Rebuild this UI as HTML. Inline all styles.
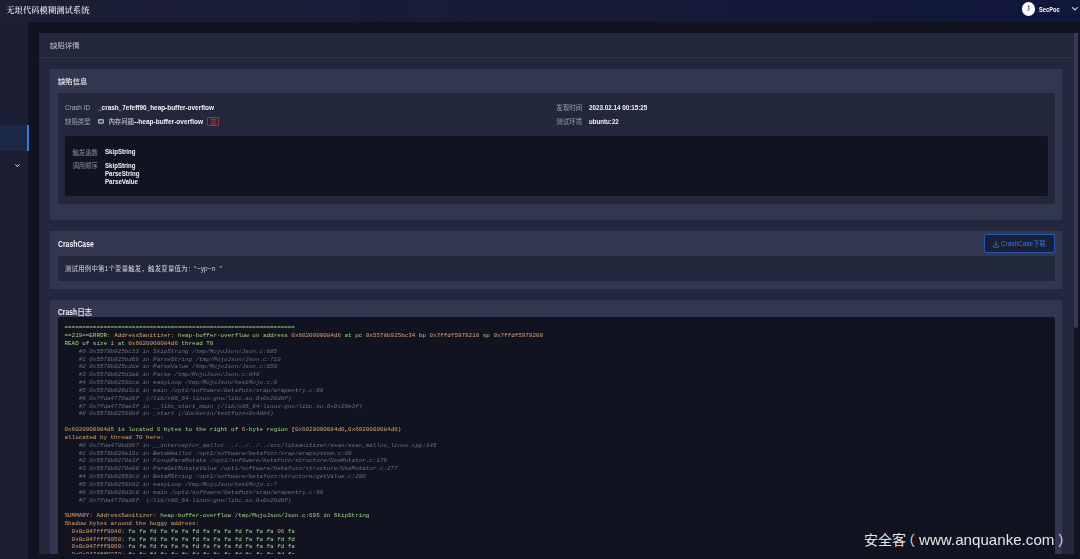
<!DOCTYPE html>
<html>
<head>
<meta charset="utf-8">
<title>无垠代码模糊测试系统</title>
<style>
*{margin:0;padding:0;box-sizing:border-box}
html,body{width:1080px;height:559px;overflow:hidden;background:#111420}
body{position:relative;font-family:"Liberation Sans","Noto Sans CJK SC",sans-serif;-webkit-font-smoothing:antialiased}
.grp{display:block;position:static}
.b{position:absolute}
.t{position:absolute;white-space:pre;height:12px;transform-origin:0 50%;filter:blur(0.35px)}
#watermark .t{filter:none}
#hdr{left:0;top:0;width:1080px;height:21.5px;background:linear-gradient(90deg,#1c1f34 0%,#0f173b 100%)}
#side{left:0;top:21.4px;width:28.2px;height:538px;background:#1c1f33}
#act{left:0;top:124.8px;width:29px;height:26.1px;background:#1c2848}
#actbar{left:26.9px;top:124.8px;width:2.1px;height:26.1px;background:#2c7de2}
#card{left:39.1px;top:32.9px;width:1034.5px;height:521px;background:#23273b}
#sep{left:39.1px;top:57px;width:1034.4px;height:1px;background:#2f3449}
#thumb{left:1073.6px;top:32.9px;width:4.4px;height:295.3px;background:#343b52;border-radius:0 0 2px 2px}
.in{background:#32364f}
.pn{background:#23273b;border-radius:1.5px}
.bk{background:#111420;border-radius:1.5px}
#in1{left:50.2px;top:68.8px;width:1011.9px;height:151.4px}
#pn1{left:57.9px;top:93.2px;width:996.9px;height:110.4px}
#bk1{left:65.1px;top:135.8px;width:982.5px;height:60.1px}
#in2{left:50.2px;top:231.2px;width:1011.9px;height:57.6px}
#pn2{left:57.9px;top:255.7px;width:996.9px;height:25.3px}
#in3{left:50.2px;top:299.8px;width:1011.9px;height:254px}
#bk3{left:57.9px;top:316.9px;width:996.9px;height:237px;border-radius:1.5px 1.5px 0 0}
#btn{left:983.6px;top:234.1px;width:71.4px;height:18.8px;border:1px solid #2359b6;border-radius:2px;background:#1b1f36}
#tag{left:207.2px;top:116.6px;width:12.3px;height:9.4px;border:0.8px solid #93363b;border-radius:1px;background:#30222f;color:#cc464b;font:400 6.2px/7.8px "Liberation Sans","Noto Sans CJK SC",sans-serif;text-align:center}
#avatar{left:1021.6px;top:2.4px;width:13.4px;height:13.4px;border-radius:50%;background:#fff}
#botmask{left:28.2px;top:553.5px;width:1052px;height:6px;background:#111420}
#log{position:absolute;white-space:pre;margin:0;filter:blur(0.4px)}
#log .g{color:#a2d386}
#log .o{color:#dba16d}
#log .c{color:#6a7082;font-style:italic}
#log .w{color:#d6d9e2}
svg{position:absolute;overflow:visible}
</style>
</head>
<body>
<aside class="grp" id="sidebar">
<div class="b" id="side"></div>
<div class="b" id="act"></div>
<div class="b" id="actbar"></div>
<svg id="sidechev" style="left:15.2px;top:163.9px" width="4.8" height="3.4" viewBox="0 0 4.8 3.4"><path d="M0.6 0.7 L2.4 2.6 L4.2 0.7" fill="none" stroke="#e6e8f0" stroke-width="1.0" stroke-linecap="round" stroke-linejoin="round"/></svg>
</aside>
<main class="grp" id="content">
<div class="b" id="card"></div>
<div class="b" id="sep"></div>
<div class="t" id="h1" style="left:50.00px;top:40.38px;font:400 7.4px/12px 'Liberation Sans', 'Noto Sans CJK SC', sans-serif;color:#bfc3d0;letter-spacing:0.007px">缺陷详情</div>
<section class="grp" id="sec-info">
<div class="b in" id="in1"></div>
<div class="b pn" id="pn1"></div>
<div class="b bk" id="bk1"></div>
<svg id="memicon" style="left:97.5px;top:119.2px" width="6" height="4.8" viewBox="0 0 6 4.8"><rect x="0.5" y="0.5" width="5" height="3.8" rx="0.5" fill="#8d93a8" stroke="#b4b9ca" stroke-width="0.9"/><rect x="1.5" y="1.5" width="3" height="1.8" fill="#2a2e42"/></svg>
<div class="b" id="tag">高</div>
<div class="t" id="h2" style="left:58.00px;top:75.97px;font:500 7.3px/12px 'Liberation Sans', 'Noto Sans CJK SC', sans-serif;color:#eef0f6;letter-spacing:0.038px">缺陷信息</div>
<div class="t" id="l1" style="left:65.00px;top:101.60px;font:400 6.8px/12px 'Liberation Sans', 'Noto Sans CJK SC', sans-serif;color:#abb1c4;transform:scaleX(0.9319)">Crash ID</div>
<div class="t" id="v1" style="left:97.50px;top:101.60px;font:700 7.1px/12px 'Liberation Sans', 'Noto Sans CJK SC', sans-serif;color:#f2f3f7;transform:scaleX(0.9054)">_crash_7efeff90_heap-buffer-overflow</div>
<div class="t" id="l2" style="left:65.00px;top:116.25px;font:400 6.4px/12px 'Liberation Sans', 'Noto Sans CJK SC', sans-serif;color:#9da3b7;letter-spacing:0.046px">缺陷类型</div>
<div class="t" id="v2a" style="left:108.40px;top:115.95px;font:400 6.4px/12px 'Liberation Sans', 'Noto Sans CJK SC', sans-serif;color:#dcdee8;letter-spacing:0.013px">内存问题</div>
<div class="t" id="v2b" style="left:134.00px;top:115.70px;font:700 7.1px/12px 'Liberation Sans', 'Noto Sans CJK SC', sans-serif;color:#f2f3f7;transform:scaleX(0.9179)">--heap-buffer-overflow</div>
<div class="t" id="l3" style="left:556.25px;top:102.35px;font:400 6.4px/12px 'Liberation Sans', 'Noto Sans CJK SC', sans-serif;color:#9da3b7;letter-spacing:0.146px">发现时间</div>
<div class="t" id="v3" style="left:588.75px;top:101.50px;font:700 7.1px/12px 'Liberation Sans', 'Noto Sans CJK SC', sans-serif;color:#f2f3f7;transform:scaleX(0.8858)">2023.02.14 00:15:25</div>
<div class="t" id="l4" style="left:556.25px;top:116.10px;font:400 6.4px/12px 'Liberation Sans', 'Noto Sans CJK SC', sans-serif;color:#9da3b7;letter-spacing:0.146px">测试环境</div>
<div class="t" id="v4" style="left:588.75px;top:115.95px;font:700 7.1px/12px 'Liberation Sans', 'Noto Sans CJK SC', sans-serif;color:#f2f3f7;transform:scaleX(0.8678)">ubuntu:22</div>
<div class="t" id="l5" style="left:72.50px;top:146.85px;font:400 6.4px/12px 'Liberation Sans', 'Noto Sans CJK SC', sans-serif;color:#878da3;letter-spacing:-0.021px">触发函数</div>
<div class="t" id="v5" style="left:105.00px;top:146.00px;font:700 7.1px/12px 'Liberation Sans', 'Noto Sans CJK SC', sans-serif;color:#f2f3f7;transform:scaleX(0.8595)">SkipString</div>
<div class="t" id="l6" style="left:72.50px;top:160.15px;font:400 6.4px/12px 'Liberation Sans', 'Noto Sans CJK SC', sans-serif;color:#878da3;letter-spacing:-0.021px">调用顺序</div>
<div class="t" id="v6a" style="left:105.00px;top:159.50px;font:700 7.1px/12px 'Liberation Sans', 'Noto Sans CJK SC', sans-serif;color:#f2f3f7;transform:scaleX(0.8595)">SkipString</div>
<div class="t" id="v6b" style="left:105.00px;top:168.00px;font:700 7.1px/12px 'Liberation Sans', 'Noto Sans CJK SC', sans-serif;color:#f2f3f7;transform:scaleX(0.8662)">ParseString</div>
<div class="t" id="v6c" style="left:105.00px;top:176.00px;font:700 7.1px/12px 'Liberation Sans', 'Noto Sans CJK SC', sans-serif;color:#f2f3f7;transform:scaleX(0.8713)">ParseValue</div>
</section>
<section class="grp" id="sec-case">
<div class="b in" id="in2"></div>
<div class="b pn" id="pn2"></div>
<div class="b" id="btn"></div>
<svg id="dlicon" style="left:993px;top:240.5px" width="6" height="7" viewBox="0 0 6 7"><path d="M3 0.4 V4.2 M1.4 2.8 L3 4.4 L4.6 2.8 M0.5 4.6 V6.3 H5.5 V4.6" fill="none" stroke="#2f7be0" stroke-width="0.75" stroke-linecap="round" stroke-linejoin="round"/></svg>
<div class="t" id="h3" style="left:58.00px;top:238.00px;font:700 8.4px/12px 'Liberation Sans', 'Noto Sans CJK SC', sans-serif;color:#f4f4f8;transform:scaleX(0.8180)">CrashCase</div>
<div class="t" id="btnt" style="left:1001.25px;top:238.00px;font:400 7.0px/12px 'Liberation Sans', 'Noto Sans CJK SC', sans-serif;color:#2f7be0;transform:scaleX(0.9130)">CrashCase下载</div>
<div class="t" id="cc" style="left:65.00px;top:263.15px;font:400 6.4px/12px 'Liberation Sans', 'Noto Sans CJK SC', sans-serif;color:#d6d9e3;letter-spacing:0.219px">测试用例中第1个变量触发，触发变量值为：“~yp~n  ”</div>
</section>
<section class="grp" id="sec-log">
<div class="b in" id="in3"></div>
<div class="b bk" id="bk3"></div>
<div class="t" id="h4a" style="left:58.00px;top:306.50px;font:700 8.2px/12px 'Liberation Sans', 'Noto Sans CJK SC', sans-serif;color:#f4f4f8;transform:scaleX(0.8183)">Crash</div>
<div class="t" id="h4b" style="left:77.20px;top:307.11px;font:500 7.6px/12px 'Liberation Sans', 'Noto Sans CJK SC', sans-serif;color:#eeeff5;letter-spacing:-0.387px">日志</div>
<pre id="log" style="left:64.5px;top:324.29px;font:5.92px/7.828px 'Liberation Mono', 'Noto Sans CJK SC', monospace"><span class="g">=================================================================</span>
<span class="g">==219==ERROR: </span><span class="o">AddressSanitizer</span><span class="g">: heap-buffer-overflow on address </span><span class="o">0x6020000084d6</span><span class="g"> at pc </span><span class="o">0x5578b925bc34</span><span class="g"> bp </span><span class="o">0x7ffdf5979210</span><span class="g"> sp </span><span class="o">0x7ffdf5979200</span>
<span class="g">READ of size </span><span class="o">1</span><span class="g"> at </span><span class="o">0x6020000084d6</span><span class="g"> thread T0</span>
<span class="c">    #0 0x5578b925bc33 in SkipString /tmp/MojoJson/Json.c:695</span>
<span class="c">    #1 0x5578b925bd6b in ParseString /tmp/MojoJson/Json.c:719</span>
<span class="c">    #2 0x5578b925cdde in ParseValue /tmp/MojoJson/Json.c:858</span>
<span class="c">    #3 0x5578b925d3ab in Parse /tmp/MojoJson/Json.c:949</span>
<span class="c">    #4 0x5578b9258bca in easyLoop /tmp/MojoJson/testMojo.c:8</span>
<span class="c">    #5 0x5578b926d3c8 in main /opt1/software/betafuzz/srap/wrapentry.c:98</span>
<span class="c">    #6 0x7fda4770ad8f  (/lib/x86_64-linux-gnu/libc.so.6+0x29d8f)</span>
<span class="c">    #7 0x7fda4770ae3f in __libc_start_main (/lib/x86_64-linux-gnu/libc.so.6+0x29e3f)</span>
<span class="c">    #8 0x5578b92589b4 in _start (/dockerin/testfuzz+0x49b4)</span>

<span class="o">0x6020000084d6</span><span class="g"> is located </span><span class="o">0</span><span class="g"> bytes to the right of </span><span class="o">6</span><span class="g">-byte region </span><span class="w">[</span><span class="o">0x6020000084d0</span><span class="w">,</span><span class="o">0x6020000084d6</span><span class="g">)</span>
<span class="o">allocated by thread T0 here:</span>
<span class="c">    #0 0x7fda479bd867 in __interceptor_malloc ../../../../src/libsanitizer/asan/asan_malloc_linux.cpp:145</span>
<span class="c">    #1 0x5578b926e10c in BetaWmalloc /opt1/software/betafuzz/srap/wrapsystem.c:88</span>
<span class="c">    #2 0x5578b9270a3f in FixupParaMutate /opt1/software/betafuzz/structure/UseMutator.c:176</span>
<span class="c">    #3 0x5578b9270e00 in ParaGetMutateValue /opt1/software/betafuzz/structure/UseMutator.c:277</span>
<span class="c">    #4 0x5578b92658cd in BetaMString /opt1/software/betafuzz/structure/getValue.c:280</span>
<span class="c">    #5 0x5578b9258b92 in easyLoop /tmp/MojoJson/testMojo.c:7</span>
<span class="c">    #6 0x5578b926d3c8 in main /opt1/software/betafuzz/srap/wrapentry.c:98</span>
<span class="c">    #7 0x7fda4770ad8f  (/lib/x86_64-linux-gnu/libc.so.6+0x29d8f)</span>

<span class="o">SUMMARY: AddressSanitizer:</span><span class="g"> heap-buffer-overflow /tmp/MojoJson/Json.c:695 in SkipString</span>
<span class="o">Shadow bytes around the buggy address:</span>
<span class="o">  0x0c047fff9040:</span><span class="g"> fa fa fd fa fa fa fd fa fa fa fd fa fa fa </span><span class="o">06</span><span class="g"> fa</span>
<span class="o">  0x0c047fff9050:</span><span class="g"> fa fa fd fa fa fa fd fa fa fa fd fa fa fa fd fd</span>
<span class="o">  0x0c047fff9060:</span><span class="g"> fa fa fd fa fa fa fd fa fa fa fd fa fa fa fd fa</span>
<span class="o">  0x0c047fff9070:</span><span class="g"> fa fa fd fa fa fa fd fa fa fa fd fa fa fa fd fa</span></pre>
</section>
<div class="b" id="botmask"></div>
<div class="b" id="thumb"></div>
</main>
<header class="grp" id="topbar">
<div class="b" id="hdr"></div>
<div class="t" id="title" style="left:6.30px;top:4.70px;font:500 8.3px/12px 'Liberation Serif', 'Noto Serif CJK SC', serif;color:#f6f6fa;letter-spacing:0.024px">无垠代码模糊测试系统</div>
<div class="t" id="user" style="left:1038.80px;top:4.10px;font:700 7.0px/12px 'Liberation Sans', 'Noto Sans CJK SC', sans-serif;color:#ffffff;transform:scaleX(0.8143)">SecPoc</div>
<div class="b" id="avatar"></div>
<svg id="avfig" style="left:1026px;top:5.3px" width="5.4" height="7.2" viewBox="0 0 5.4 7.2"><circle cx="2.7" cy="1.3" r="0.85" fill="#3e3e3e"/><path d="M2 2.2 H3.5 L4.2 4.3 L3.5 4.6 L3.7 6.5 H2.7 L2.5 5 L1.6 6.3 L0.9 5.8 L1.9 4.3 Z" fill="#9f9f9f"/></svg>
<svg id="hdrchev" style="left:1071.5px;top:7.2px" width="5.8" height="3.6" viewBox="0 0 5.8 3.6"><path d="M0.5 0.6 L2.9 2.9 L5.3 0.6" fill="none" stroke="#d3d6e6" stroke-width="1.2" stroke-linecap="round" stroke-linejoin="round"/></svg>
</header>
<footer class="grp" id="watermark">
<div class="t" id="wm1" style="left:864.00px;top:534.15px;font:400 14px/12px 'Liberation Sans', 'Noto Sans CJK SC', sans-serif;color:#e6e6e6">安全客</div>
<div class="t" id="wm2" style="left:901.00px;top:534.15px;font:400 14px/12px 'Liberation Sans', 'Noto Sans CJK SC', sans-serif;color:#e6e6e6">（</div>
<div class="t" id="wm3" style="left:919.00px;top:533.60px;font:400 15px/12px 'Liberation Sans', 'Noto Sans CJK SC', sans-serif;color:#e6e6e6;transform:scaleX(1.0086)">www.anquanke.com</div>
<div class="t" id="wm4" style="left:1058.00px;top:534.15px;font:400 14px/12px 'Liberation Sans', 'Noto Sans CJK SC', sans-serif;color:#e6e6e6">）</div>
</footer>
</body>
</html>
